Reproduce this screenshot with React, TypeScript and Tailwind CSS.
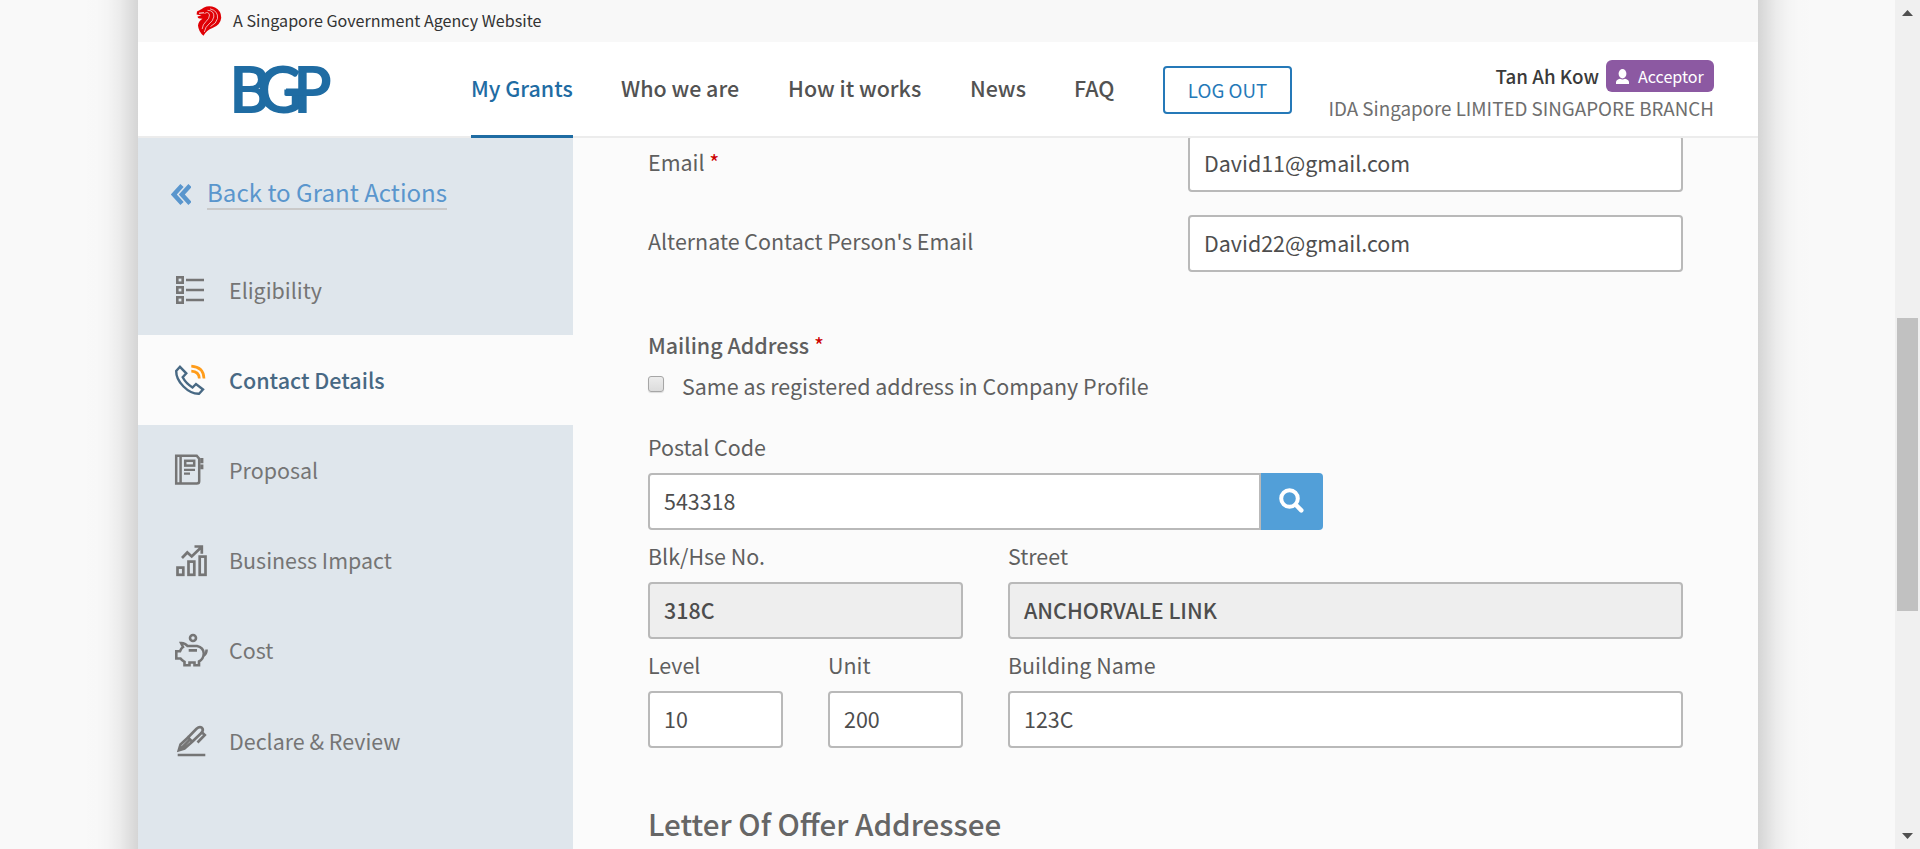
import React from "react";

const Lion = () => (
  <svg className="h-[30px] w-[26px]" viewBox="0 0 26 30">
    <path fill="#e00005" d="M1 5.5 Q6 3 8 1.5 Q13 -.8 19 1.5 Q25.5 5 25.200 12 Q24.500 19 16.500 22 Q10.500 24 7.500 29.800 Q2.500 25.500 2 19.500 Q2.600 15 6.500 12.800 L3.500 12.400 Q1.500 12 1.600 10.500 L5.500 9.500 L.6 8.400 Z" />
    <g fill="none" stroke="#f8f8f8" strokeWidth=".7">
      <path d="M8.500 7.500 Q12.500 5 13.500 9 Q13.500 12.500 10 15.500 Q6.500 18.500 6.200 23" />
      <path d="M11.500 4.300 Q18.500 4.500 17.800 11 Q17 15 13 18 Q9.500 20.500 8.300 26" />
      <path d="M14 2.800 Q22.500 5 21.500 12.500 Q20.500 17.500 14.500 20.500" />
    </g>
    <path stroke="#f8f8f8" strokeWidth="1" fill="none" d="M3 7.200L8 6.800" />
  </svg>
);

const Logo = () => (
  <svg className="h-[50px] w-[100px] overflow-visible" viewBox="0 0 100 50" fill="#1f6ca3">
    <text transform="scale(.95 1)" x="-5 24.500 62.500" y="47.400" fontFamily="Lato, sans-serif" fontWeight="700" fontSize="65.500">BGP</text>
    <rect x="52" y="22.500" width="18" height="6.800" />
  </svg>
);

const icon = "h-[34px] w-[34px] shrink-0";

const EligibilityIcon = () => (
  <svg className={icon} viewBox="0 0 34 34" fill="none" stroke="currentColor" strokeWidth="2.600">
    <rect x="3.300" y="4.300" width="5.400" height="5.400" />
    <rect x="3.300" y="14.300" width="5.400" height="5.400" />
    <rect x="3.300" y="24.300" width="5.400" height="5.400" />
    <path d="M12 7h18M12 17h18M12 27h18" />
  </svg>
);

const ContactIcon = () => (
  <svg className={icon} viewBox="0 0 34 34" fill="none" stroke="currentColor" strokeWidth="2.400">
    <path d="M6 3.800 L12.300 10.300 L8.700 14.300 Q12 20.500 18.500 24.500 L22 21 L29 26.500 L25 30.800 Q17 31 9.500 23.500 Q2 16 2.200 8 Z" />
    <path stroke="#ff9c1a" strokeWidth="2.700" d="M17.300 3.200 Q29.500 4 30 15.500M17.300 8.200 Q25 8.500 25.300 15.500" />
  </svg>
);

const ProposalIcon = () => (
  <svg className={icon} viewBox="0 0 34 34" fill="none" stroke="currentColor" strokeWidth="2.500">
    <path d="M2.200 2.700h20.500l2.500 3v22.500q0 2.300-2.500 2.300H2.200zM6.600 2.700v27.800" />
    <rect x="11.200" y="7.800" width="9" height="4.800" />
    <path strokeWidth="2.200" d="M10 16.800h11M10 20.600h6" />
    <path strokeWidth="3.200" d="M27.800 5v5.300M27.800 11.500v4.700" />
  </svg>
);

const ImpactIcon = () => (
  <svg className={icon} viewBox="0 0 34 34" fill="none" stroke="currentColor" strokeWidth="2.700">
    <rect x="3.500" y="24.600" width="5.800" height="7.200" />
    <rect x="14.500" y="18.600" width="5.800" height="13.200" />
    <rect x="25.700" y="13.600" width="5.800" height="18.200" />
    <path d="M8 15l5.300-5.500 4.400 4L27 4.500M20.500 3.500h7.300v7.300" />
  </svg>
);

const CostIcon = () => (
  <svg className={icon} viewBox="0 0 34 34" fill="none" stroke="currentColor" strokeWidth="2.600">
    <circle cx="19" cy="5" r="3" />
    <path d="M7 10 Q11 9.800 13.500 13 L23 13 Q29.500 14.500 29.800 20.500 Q29.500 26 25 28.500 L25 32.200 H20.500 V29.500 H15.500 V32.200 H10.500 V28.800 Q8 27.500 6.500 25.500 H2.300 V18.200 H6 Q7 15.500 9 14 Z" />
    <path d="M14.700 17.400H23M29.500 22.500Q32.500 21.500 32.600 16.500" />
  </svg>
);

const DeclareIcon = () => (
  <svg className={icon} viewBox="0 0 34 34" fill="none" stroke="currentColor" strokeWidth="2.600">
    <path d="M4.800 26.200L6.500 20.500 14.500 13 22.500 4.800Q25.500 2 28 3.800 30 6 27.300 9L18.500 17.500 10.500 24.500ZM13 12.500L19 18.500M6.500 25L15.500 16" />
    <path d="M27 7.500L30.800 11 23.500 18.500M3.700 31H31.300" />
  </svg>
);

const steps = [
  { label: "Eligibility", Icon: EligibilityIcon },
  { label: "Contact Details", Icon: ContactIcon, active: true },
  { label: "Proposal", Icon: ProposalIcon },
  { label: "Business Impact", Icon: ImpactIcon },
  { label: "Cost", Icon: CostIcon },
  { label: "Declare & Review", Icon: DeclareIcon },
];

const Star = () => <span className="font-normal text-[#c00]">*</span>;

const Box = ({ value, disabled }: { value: string; disabled?: boolean }) => (
  <div
    className={
      "flex h-[57px] w-full items-center rounded-[4px] border-2 border-[#b9b9b9] px-[14px] pb-px text-[#4d4d4d] " +
      (disabled ? "bg-[#eee] font-medium" : "bg-white")
    }
  >
    {value}
  </div>
);

const Field = ({ label, children }: { label: string; children: React.ReactNode }) => (
  <div className="pt-[9.5px]">
    <div className="mb-[10.5px] h-8 leading-8">{label}</div>
    {children}
  </div>
);

export default function App() {
  return (
    <div className="flex h-[849px] w-[1920px] overflow-hidden bg-[#f9f9f9] font-['Noto_Sans_CJK_SC','Noto_Sans',sans-serif] text-[21.45px] leading-8 text-[#5f5f5f]">
      <div className="flex h-full flex-1 overflow-hidden pl-[78px]">
        <div className="w-[60px] shrink-0 bg-[linear-gradient(to_left,rgba(0,0,0,0.145)_0px,rgba(0,0,0,0.105)_8px,rgba(0,0,0,0.055)_18px,rgba(0,0,0,0.02)_30px,rgba(0,0,0,0.005)_42px,transparent_60px)]" />
        <div className="flex h-full w-[1620px] shrink-0 flex-col bg-[#fbfbfb]">
          <div className="flex h-[42px] shrink-0 items-center bg-[#f8f8f8] pl-[58px] text-[16.13px] text-[#333]">
            <Lion />
            <span className="ml-[11px] pb-[3px]">A Singapore Government Agency Website</span>
          </div>
          <header className="relative z-10 flex h-24 shrink-0 bg-white shadow-[inset_0_-2px_0_#ececec]">
            <div className="w-[333px] pt-6 pl-24">
              <Logo />
            </div>
            <nav className="flex gap-12 font-medium text-[#525252]">
              <a className="h-24 w-[102px] border-b-[3px] border-[#1f6ca3] pt-[30px] whitespace-nowrap text-[#1f6ca3]">My Grants</a>
              <a className="w-[119px] pt-[30px] whitespace-nowrap">Who we are</a>
              <a className="w-[134px] pt-[30px] whitespace-nowrap">How it works</a>
              <a className="w-[56px] pt-[30px] whitespace-nowrap">News</a>
              <a className="w-[41px] pt-[30px] whitespace-nowrap">FAQ</a>
            </nav>
            <button className="mt-6 ml-12 h-12 w-[129px] rounded-[4px] border-2 border-[#2579b8] text-[18.75px] text-[#2579b8]">LOG OUT</button>
            <div className="ml-auto flex flex-col items-end pt-[18px] pr-11">
              <div className="flex h-8 items-center gap-[7px]">
                <span className="pb-px text-[18.75px] font-medium text-[#3a3a3a]">Tan Ah Kow</span>
                <span className="flex h-8 w-[108px] items-center rounded-[6px] bg-[#8c59a2] pl-[10px] text-[16.1px] text-white">
                  <svg className="mr-[9px] h-[15px] w-[13px]" viewBox="0 0 13 15" fill="currentColor">
                    <ellipse cx="6.500" cy="4.700" rx="3.900" ry="4.700" />
                    <path d="M0 15v-2q.5-2.500 4-3.200 2.500 1.200 5 0Q12.500 10.500 13 13v2z" />
                  </svg>
                  Acceptor
                </span>
              </div>
              <div className="text-[18.8px] text-[#6e6e6e]">IDA Singapore LIMITED SINGAPORE BRANCH</div>
            </div>
          </header>
          <div className="flex min-h-0 flex-1">
            <aside className="w-[435px] shrink-0 bg-[#dfe6ec] text-[#757575]">
              <div className="flex h-[107px] items-start pt-[35px] pl-[33px] text-[#5a96cd]">
                <svg className="mt-[11px] mr-4 h-[21px] w-5" viewBox="0 0 20 21" fill="none" stroke="currentColor" strokeWidth="4.400">
                  <path d="M11 1.500L2.800 10.500 11 19.500M19 1.500L10.800 10.500 19 19.500" />
                </svg>
                <a className="border-b-2 border-[#c9c9c9] pt-0.5 text-[24.1px] leading-[33px]">Back to Grant Actions</a>
              </div>
              {steps.map(({ label, Icon, active }) => (
                <div
                  key={label}
                  className={
                    "flex h-[90.1px] items-center gap-[21px] pl-9 " +
                    (active ? "bg-[#fbfbfb] text-[21.55px] font-medium text-[#486984]" : "")
                  }
                >
                  <Icon />
                  {label}
                </div>
              ))}
            </aside>
            <main className="-mt-[3px] flex-1 pl-[75px]">
              <div className="w-[1035px]">
                <div className="flex">
                  <div className="w-[540px] pt-[11px]">Email <Star /></div>
                  <div className="w-[495px]"><Box value="David11@gmail.com" /></div>
                </div>
                <div className="mt-[23px] flex">
                  <div className="w-[540px] pt-[10px]">Alternate Contact Person's Email</div>
                  <div className="w-[495px]"><Box value="David22@gmail.com" /></div>
                </div>
                <div className="mt-[57px] font-medium">Mailing Address <Star /></div>
                <div className="mt-[9px] flex">
                  <span className="mt-1.5 mr-[18px] h-4 w-4 rounded-[3px] border border-[#a6a6a6] bg-linear-to-b from-[#ececec] to-[#dcdcdc] shadow-[0_1px_1px_rgba(0,0,0,0.12)]" />
                  Same as registered address in Company Profile
                </div>
                <div className="mt-[19px] w-[675px]">
                  <Field label="Postal Code">
                    <div className="flex h-[57px]">
                      <div className="flex w-[613px] items-center rounded-l-[4px] border-2 border-[#b9b9b9] bg-white px-[14px] pb-px text-[#4d4d4d]">543318</div>
                      <button className="flex w-[62px] items-center justify-center rounded-r-[4px] bg-[#529fd8] pr-0.5 pb-0.5 text-white">
                        <svg className="h-[25px] w-[25px]" viewBox="0 0 25 25" fill="none" stroke="currentColor" strokeWidth="4">
                          <circle cx="10.500" cy="10.500" r="8.300" />
                          <path strokeLinecap="round" strokeWidth="4.500" d="M17 17l5.300 5.300" />
                        </svg>
                      </button>
                    </div>
                  </Field>
                </div>
                <div className="grid grid-cols-[315px_675px] gap-x-[45px]">
                  <Field label="Blk/Hse No."><Box value="318C" disabled /></Field>
                  <Field label="Street"><Box value="ANCHORVALE LINK" disabled /></Field>
                </div>
                <div className="grid grid-cols-[135px_135px_675px] gap-x-[45px]">
                  <Field label="Level"><Box value="10" /></Field>
                  <Field label="Unit"><Box value="200" /></Field>
                  <Field label="Building Name"><Box value="123C" /></Field>
                </div>
                <h2 className="mt-[54px] text-[29.6px] leading-[44px] font-medium text-[#666]">Letter Of Offer Addressee</h2>
              </div>
            </main>
          </div>
        </div>
        <div className="w-[60px] shrink-0 bg-[linear-gradient(to_right,rgba(0,0,0,0.145)_0px,rgba(0,0,0,0.105)_8px,rgba(0,0,0,0.055)_18px,rgba(0,0,0,0.02)_30px,rgba(0,0,0,0.005)_42px,transparent_60px)]" />
      </div>
      <div className="flex h-full w-[25px] flex-col items-center bg-[#f0f0f0] py-[10px]">
        <svg className="h-[6px] w-[11px]" viewBox="0 0 11 6" fill="#505050"><path d="M0 6L5.500 0 11 6z" /></svg>
        <div className="mt-[302px] h-[293px] w-[21px] bg-[#c1c1c1]" />
        <svg className="mt-auto h-[6px] w-[11px]" viewBox="0 0 11 6" fill="#505050"><path d="M0 0L5.500 6 11 0z" /></svg>
      </div>
    </div>
  );
}
